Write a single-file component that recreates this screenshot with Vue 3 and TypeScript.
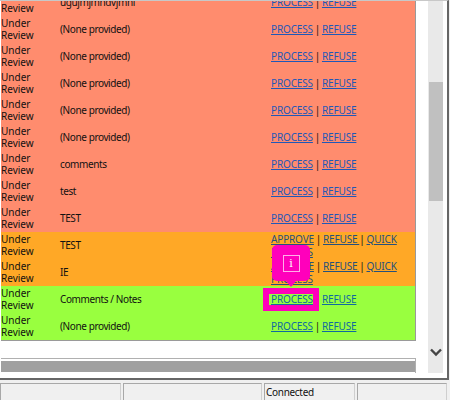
<script setup lang="ts">
interface Row { note: string; kind: 'salmon' | 'orange' | 'green' }
const rows: Row[] = [
  { note: 'ugujmjmhdvjmhl', kind: 'salmon' },
  { note: '(None provided)', kind: 'salmon' },
  { note: '(None provided)', kind: 'salmon' },
  { note: '(None provided)', kind: 'salmon' },
  { note: '(None provided)', kind: 'salmon' },
  { note: '(None provided)', kind: 'salmon' },
  { note: 'comments', kind: 'salmon' },
  { note: 'test', kind: 'salmon' },
  { note: 'TEST', kind: 'salmon' },
  { note: 'TEST', kind: 'orange' },
  { note: 'IE', kind: 'orange' },
  { note: 'Comments / Notes', kind: 'green' },
  { note: '(None provided)', kind: 'green' },
]
</script>

<template>
  <div class="app">
    <div class="window">
      <div class="content">
        <div class="pane">
          <div class="list">
            <div v-for="(r, i) in rows" :key="i" class="row" :class="r.kind">
              <div class="status">Under Review</div>
              <div class="note">{{ r.note }}</div>
              <div class="actions">
                <template v-if="r.kind === 'orange'">
                  <a href="#">APPROVE</a> | <a href="#">REFUSE </a> | <a href="#">QUICK PROCESS</a>
                </template>
                <template v-else>
                  <span class="anchor" :class="{ marked: i === 11 }">
                    <a href="#">PROCESS</a>
                    <span v-if="i === 11" class="tip"><span class="tip-icon">i</span></span>
                  </span> | <a href="#">REFUSE</a>
                </template>
              </div>
            </div>
          </div>
          <div class="gap"></div>
          <div class="hbar"><div class="hthumb"></div></div>
        </div>
        <div class="vbar">
          <div class="vtrack"><div class="vthumb"></div></div>
          <svg class="chev" width="12" height="9" viewBox="0 0 12 9">
            <path d="M1 1.5 L6 6.5 L11 1.5" fill="none" stroke="#444" stroke-width="2.4" />
          </svg>
        </div>
      </div>
    </div>
    <div class="statusbar">
      <div class="panel p1"></div>
      <div class="panel p2"></div>
      <div class="panel p3">Connected</div>
      <div class="panel p4"></div>
    </div>
  </div>
</template>

<style>
html, body { margin: 0; background: #f0f0f0; }
</style>

<style scoped>
.app {
  width: 450px;
  height: 400px;
  overflow: hidden;
  display: flex;
  flex-direction: column;
  font-family: "Noto Sans", "Liberation Sans", sans-serif;
  font-size: 10px;
  color: #111;
  background: #f0f0f0;
}
.window {
  width: 449px;
  height: 380px;
  box-sizing: border-box;
  flex: none;
  overflow: hidden;
  background: #fff;
  border-top: 1px solid #c8c8c8;
  border-right: 2px solid #666;
  border-bottom: 2px solid #666;
}
.content { display: flex; height: 100%; }
.pane { width: 416px; flex: none; display: flex; flex-direction: column; padding-left: 1px; box-sizing: border-box; overflow: hidden; }
.list { flex: none; margin-top: -12px; border-right: 1px solid #9a9a9a; border-bottom: 1px solid #9a9a9a; }
.row {
  height: 27px;
  display: grid;
  grid-template-columns: 59px 211px 1fr;
  line-height: 12px;
  align-items: center;
}
.salmon { background: #ff8c6e; }
.orange { background: #ffa826; }
.green { background: #99ff3f; }
.status { width: 34px; padding-bottom: 1px; }
.note { letter-spacing: -0.4px; padding-bottom: 2px; }
.actions { line-height: 13px; letter-spacing: -0.15px; word-spacing: -0.6px; }
.actions a { color: #1f58b8; text-decoration: underline; }
.orange .actions a { color: #26507c; }
.green .actions a { color: #0f6aa0; }
.anchor { position: relative; display: inline-block; }
.marked::before {
  content: '';
  position: absolute;
  inset: -5px -6px -5px -8px;
  border: 6px solid #ff00bb;
  pointer-events: none;
}
.tip {
  position: absolute;
  left: 1px;
  bottom: 25px;
  width: 38px;
  height: 36px;
  background: #ff00bb;
  border-radius: 5px;
  display: flex;
  align-items: center;
  justify-content: center;
}
.tip::after {
  content: '';
  position: absolute;
  left: 14px;
  bottom: -6px;
  border-left: 5px solid transparent;
  border-right: 5px solid transparent;
  border-top: 6px solid #ff00bb;
}
.tip-icon {
  width: 15px;
  height: 15px;
  border: 1px solid #ffb0e8;
  color: #fff;
  font-family: "DejaVu Serif", serif;
  font-size: 11px;
  line-height: 15px;
  text-align: center;
}
.gap { height: 17px; flex: none; }
.hbar { flex: none; height: 15px; border-top: 1px solid #b0b0b0; border-right: 1px solid #b0b0b0; padding-top: 2px; box-sizing: border-box; }
.hthumb { height: 11px; background: #a0a0a0; }
.vbar { position: relative; width: 31px; flex: none; padding-left: 12px; box-sizing: border-box; }
.vtrack { width: 15px; height: 372px; background: #e9e9e9; overflow: hidden; padding-top: 1px; box-sizing: border-box; }
.vthumb { margin-top: 80px; height: 119px; background: #c0c0c0; width: 14px; margin-left: 1px; }
.chev { position: absolute; left: 14px; top: 347px; }
.statusbar { flex: none; display: flex; gap: 2px; height: 20px; padding-top: 3px; box-sizing: border-box; }
.panel { border-top: 1px solid #a8a8a8; border-left: 1px solid #a8a8a8; border-right: 1px solid #cfcfcf; box-sizing: border-box; height: 100%; line-height: 17px; padding-left: 1px; font-size: 10px; letter-spacing: -0.3px; }
.p1 { width: 121px; }
.p2 { width: 139px; }
.p3 { width: 91px; }
.p4 { width: 90px; }
</style>
